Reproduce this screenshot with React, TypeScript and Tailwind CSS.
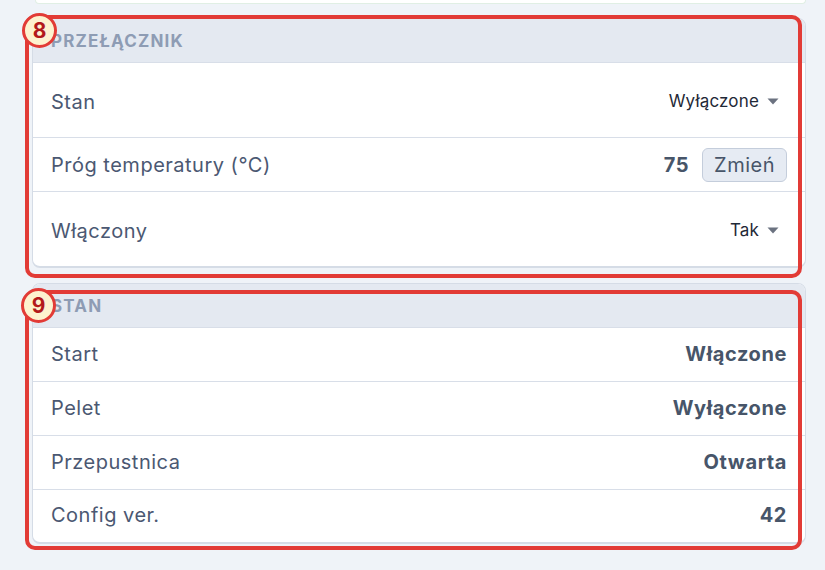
import React from 'react';

// --- Badge (annotation) ---
const Badge: React.FC<{ n: number; className: string }> = ({ n, className }) => (
    <div className={`absolute z-20 w-[35px] h-[35px] rounded-full bg-[#fdf2cf] border-[3px] border-[#e23b36] flex items-center justify-center ${className}`}>
        <span className="text-[21px] font-bold text-[#b3191b] leading-none">{n}</span>
    </div>
);

const Caret = () => (
    <svg width="12" height="7" viewBox="0 0 12 7" className="ml-[8px]">
        <path d="M0.5 0.5 L11.5 0.5 L6 6.5 Z" fill="#6b7280" />
    </svg>
);

interface Row {
    label: string;
    value: string;
}

const stanRows: Row[] = [
    { label: 'Start', value: 'Włączone' },
    { label: 'Pelet', value: 'Wyłączone' },
    { label: 'Przepustnica', value: 'Otwarta' },
    { label: 'Config ver.', value: '42' },
];

export default function App() {
    return (
        <div className="min-h-screen w-[825px] h-[570px] overflow-hidden bg-[#eff3f8] pl-[32px] pr-[19px]" style={{ fontFamily: 'Inter, "Liberation Sans", sans-serif' }}>
            {/* previous card, cut off at top */}
            <div className="h-[4px] ml-[3px] bg-white border border-t-0 border-[#e0efe4] rounded-b-[8px]" />

            {/* --- Przełącznik --- */}
            <div className="relative mt-[14px]">
                <div className="absolute z-10 left-[-7px] top-[-3px] w-[777px] h-[263px] border-4 border-[#e23b36] rounded-[10px] pointer-events-none" />
                <Badge n={8} className="left-[-10px] top-[-5px]" />
                <div className="bg-white border border-b-2 border-[#d5dce6] rounded-[8px] overflow-hidden">
                    <div className="h-[43px] bg-[#e4e9f1] flex items-center pl-[18px] pt-[3px]">
                        <span className="text-[17px] font-bold tracking-[0.07em] text-[#8e9cb4]">PRZEŁĄCZNIK</span>
                    </div>
                    <div className="h-[75px] border-t border-[#d8dee8] flex items-center justify-between pl-[18px] pr-[26px] pt-[3px]">
                        <span className="text-[20px] tracking-[0.025em] text-[#4b5872]">Stan</span>
                        <div className="flex items-center">
                            <span className="text-[17px] tracking-[0.01em] text-[#1f2937]">Wyłączone</span>
                            <Caret />
                        </div>
                    </div>
                    <div className="h-[54px] border-t border-[#d8dee8] flex items-center justify-between pl-[18px] pr-[18px]">
                        <span className="text-[20px] tracking-[0.025em] text-[#4b5872]">Próg temperatury (°C)</span>
                        <div className="flex items-center">
                            <span className="text-[20px] font-bold tracking-[0.03em] text-[#475569] mr-[13px]">75</span>
                            <button type="button" className="h-[34px] px-[11px] bg-[#e6ebf3] border border-[#c4cddb] rounded-[6px] text-[20px] tracking-[0.025em] text-[#475569] leading-none">
                                Zmień
                            </button>
                        </div>
                    </div>
                    <div className="h-[75px] border-t border-[#d8dee8] flex items-center justify-between pl-[18px] pr-[26px] pt-[3px]">
                        <span className="text-[20px] tracking-[0.025em] text-[#4b5872]">Włączony</span>
                        <div className="flex items-center">
                            <span className="text-[17px] tracking-[0.01em] text-[#1f2937]">Tak</span>
                            <Caret />
                        </div>
                    </div>
                </div>
            </div>

            {/* --- Stan --- */}
            <div className="relative mt-[15px]">
                <div className="absolute z-10 left-[-7px] top-[7px] w-[777px] h-[260px] border-4 border-[#e23b36] rounded-[10px] pointer-events-none" />
                <Badge n={9} className="left-[-11px] top-[5px]" />
                <div className="bg-white border border-b-2 border-[#d5dce6] rounded-[8px] overflow-hidden">
                    <div className="h-[43px] bg-[#e4e9f1] flex items-center pl-[18px] pt-[3px]">
                        <span className="text-[17px] font-bold tracking-[0.07em] text-[#8e9cb4]">STAN</span>
                    </div>
                    {stanRows.map((r, i) => (
                        <div key={r.label} className={`${i === 3 ? 'h-[53px]' : 'h-[54px]'} border-t border-[#d8dee8] flex items-center justify-between pl-[18px] pr-[18px] pb-[2px]`}>
                            <span className="text-[20px] tracking-[0.025em] text-[#4b5872]">{r.label}</span>
                            <span className="text-[20px] font-bold tracking-[0.03em] text-[#475569]">{r.value}</span>
                        </div>
                    ))}
                </div>
            </div>
        </div>
    );
}
